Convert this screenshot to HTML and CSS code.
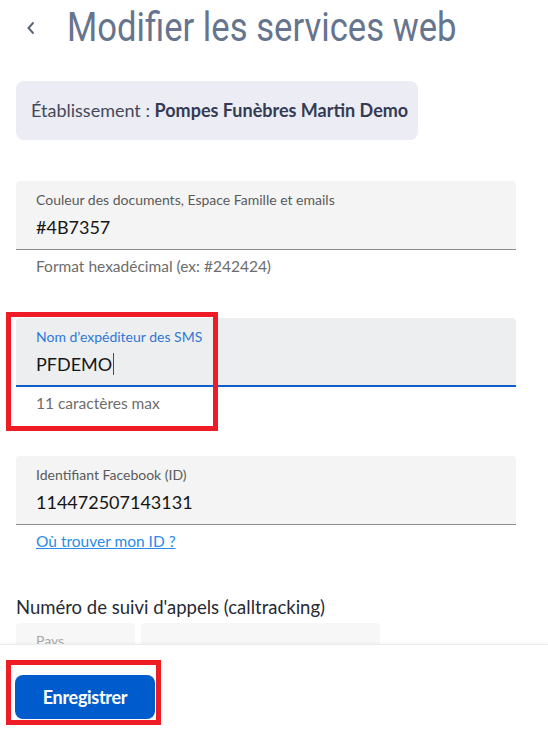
FILE: index.html
```html
<!DOCTYPE html>
<html lang="fr">
<head>
<meta charset="utf-8">
<title>Modifier les services web</title>
<link rel="stylesheet" href="styles.css">
</head>
<body>
<div class="page">
  <header class="header">
    <button class="back" aria-label="Retour">
      <svg width="10" height="14" viewBox="0 0 10 14"><path d="M7.5 1.5 L2.5 7 L7.5 12.5" fill="none" stroke="#5b6579" stroke-width="2"/></svg>
    </button>
    <h1 class="title">Modifier les services web</h1>
  </header>

  <div class="estab">Établissement : <strong>Pompes Funèbres Martin Demo</strong></div>

  <div class="group">
    <div class="field">
      <div class="label">Couleur des documents, Espace Famille et emails</div>
      <div class="value">#4B7357</div>
    </div>
    <div class="helper">Format hexadécimal (ex: #242424)</div>
  </div>

  <div class="group">
    <div class="field field-focus">
      <div class="label label-focus">Nom d’expéditeur des SMS</div>
      <div class="value">PFDEMO<span class="caret"></span></div>
    </div>
    <div class="helper">11 caractères max</div>
  </div>

  <div class="group group-last">
    <div class="field">
      <div class="label">Identifiant Facebook (ID)</div>
      <div class="value">114472507143131</div>
    </div>
    <div class="helper"><a href="#" class="link">Où trouver mon ID ?</a></div>
  </div>

  <h2 class="section">Numéro de suivi d'appels (calltracking)</h2>
  <div class="phone-row">
    <div class="phone-box country"><div class="label label-light">Pays</div></div>
    <div class="phone-box number"></div>
  </div>
</div>

<footer class="footer">
  <button class="save">Enregistrer</button>
</footer>

<div class="mark mark-sms"></div>
<div class="mark mark-save"></div>
</body>
</html>
```

FILE: styles.css
```css
html, body {
  margin: 0;
  padding: 0;
  background: #ffffff;
}
body {
  font-family: Lato, "Noto Sans", sans-serif;
  color: #161616;
  height: 742px;
  overflow: hidden;
}
.page {
  padding: 0 32px 0 16px;
}
.header {
  display: flex;
  align-items: center;
  height: 60px;
  gap: 31px;
  padding-left: 10px;
}
.back {
  border: 0;
  background: none;
  padding: 0;
  width: 10px;
  height: 14px;
  display: flex;
  margin-top: -4px;
  flex: none;
}
.title {
  margin: -6px 0 0;
  font-family: Roboto, "Liberation Sans", sans-serif;
  font-weight: 400;
  font-size: 41px;
  line-height: 48px;
  color: #66748e;
  white-space: nowrap;
  transform: scaleX(0.845);
  transform-origin: left center;
}
.estab {
  margin-top: 21px;
  display: inline-block;
  background: #ebecf4;
  border-radius: 8px;
  height: 59px;
  line-height: 59px;
  padding: 0 15px;
  font-size: 18px;
  color: #44495a;
  width: 372px;
  white-space: nowrap;
}
.estab strong {
  color: #353b52;
  font-weight: 700;
}
.group {
  margin-top: 41px;
}
.group + .group {
  margin-top: 41px;
}
.group-last {
  margin-top: 42px !important;
}
.field {
  background: #f4f4f4;
  border-radius: 4px 4px 0 0;
  border-bottom: 1px solid #8d8d8d;
  padding: 10px 20px 0;
  box-sizing: border-box;
  height: 69px;
}
.field-focus {
  background: #edeef0;
  border-bottom: 2px solid #0f5ccc;
}
.label {
  font-size: 14px;
  line-height: 18px;
  color: #5a5a5a;
}
.label-focus {
  color: #2f78d4;
}
.label-light {
  color: #a8a8a8;
}
.value {
  font-size: 18px;
  line-height: 24px;
  margin-top: 6px;
  color: #161616;
  display: flex;
  align-items: center;
}
.caret {
  display: inline-block;
  width: 1px;
  height: 22px;
  background: #1b4fa0;
  margin-left: 1px;
}
.helper {
  padding: 5px 20px 0;
  font-size: 15.5px;
  line-height: 22px;
  color: #6d6d6d;
}
.link {
  color: #2b8be6;
  text-decoration: underline;
}
.section {
  margin: 43px 0 0;
  font-weight: 400;
  font-size: 18.5px;
  line-height: 24px;
  color: #262a33;
}
.phone-row {
  display: flex;
  gap: 6px;
  margin-top: 4px;
}
.phone-box {
  height: 60px;
  background: #f7f7f7;
  border-radius: 4px 4px 0 0;
  padding: 9px 20px 0;
  box-sizing: border-box;
}
.country {
  width: 119px;
}
.number {
  width: 239px;
}
.footer {
  position: fixed;
  left: 0;
  right: 0;
  bottom: 0;
  height: 98px;
  background: #ffffff;
  border-top: 1px solid #ececec;
  box-shadow: 0 -1px 3px rgba(0,0,0,0.04);
  padding: 30px 0 0 15px;
  box-sizing: border-box;
}
.save {
  width: 140px;
  height: 44px;
  border: 0;
  border-radius: 8px;
  background: #005ccc;
  color: #ffffff;
  font-family: Lato, "Noto Sans", sans-serif;
  font-weight: 700;
  font-size: 18px;
  letter-spacing: -0.3px;
  cursor: pointer;
}
.mark {
  position: absolute;
  border: 5px solid #ee1c25;
  box-sizing: border-box;
  pointer-events: none;
}
.mark-sms {
  left: 6px;
  top: 312px;
  width: 212px;
  height: 119px;
}
.mark-save {
  left: 6px;
  top: 660px;
  width: 155px;
  height: 65px;
}
```
